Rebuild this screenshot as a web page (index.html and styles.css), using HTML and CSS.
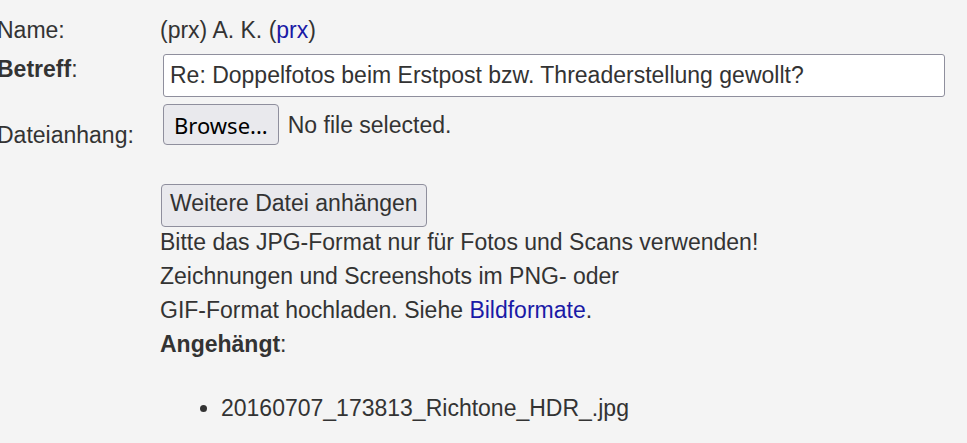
FILE: index.html
```html
<!DOCTYPE html>
<html lang="de">
<head>
    <meta charset="UTF-8">
    <title>Antwort schreiben</title>
    <link rel="stylesheet" href="styles.css">
</head>
<body>
    <form class="post-form" action="#" method="post">
        <div class="form-row">
            <div class="form-label">Name:</div>
            <div class="form-value">(prx) A. K. (<a href="#" class="link">prx</a>)</div>
        </div>

        <div class="form-row">
            <div class="form-label"><b>Betreff</b>:</div>
            <div class="form-value">
                <input type="text" class="subject-input" name="subject"
                       value="Re: Doppelfotos beim Erstpost bzw. Threaderstellung gewollt?">
            </div>
        </div>

        <div class="form-row">
            <div class="form-label label-file">Dateianhang:</div>
            <div class="form-value file-field">
                <button type="button" class="browse-btn">Browse...</button>
                <span class="file-status">No file selected.</span>
            </div>
        </div>

        <div class="form-row">
            <div class="form-label"></div>
            <div class="form-value attach-block">
                <button type="button" class="more-btn">Weitere Datei anhängen</button>
                <p class="attach-hint">
                    Bitte das JPG-Format nur für Fotos und Scans verwenden!<br>
                    Zeichnungen und Screenshots im PNG- oder<br>
                    GIF-Format hochladen. Siehe <a href="#" class="link">Bildformate</a>.<br>
                    <b>Angehängt</b>:
                </p>
                <ul class="attach-list">
                    <li>20160707_173813_Richtone_HDR_.jpg</li>
                </ul>
            </div>
        </div>
    </form>
</body>
</html>
```

FILE: styles.css
```css
* {
    box-sizing: border-box;
}

body {
    margin: 0;
    background: #f4f4f4;
    color: #333;
    font-family: "Liberation Sans", Arial, sans-serif;
    font-size: 23px;
    line-height: 34px;
    overflow: hidden;
}

.post-form {
    margin-left: -3px;
    padding-top: 13px;
}

.form-row {
    display: flex;
    align-items: flex-start;
}

.form-row + .form-row {
    margin-top: 5px;
}

.form-label {
    width: 163px;
    flex-shrink: 0;
}

.form-value {
    flex: 1;
}

.link {
    color: #1a1aa6;
    text-decoration: none;
}

.subject-input {
    display: block;
    width: 782px;
    height: 43px;
    margin: 2px 0 0 3px;
    padding: 0 6px;
    border: 1px solid #8f8f9d;
    border-radius: 3px;
    background: white;
    color: #333;
    font: inherit;
}

/* file picker row */
.form-row:nth-child(3) {
    margin-top: 7px;
}

.label-file {
    padding-top: 14px;
}

.file-field {
    display: flex;
    align-items: center;
}

.browse-btn {
    height: 41px;
    margin-left: 3px;
    padding: 0 10px;
    border: 1px solid #8f8f9d;
    border-radius: 4px;
    background: #e9e9ed;
    color: #000;
    font-family: "Noto Sans", sans-serif;
    font-size: 22px;
}

.file-status {
    margin-left: 9px;
}

.attach-block {
    padding-top: 27px;
}

.more-btn {
    display: block;
    margin-left: 1px;
    padding: 5px 8px 9px;
    border: 1px solid #8f8f9d;
    border-radius: 4px;
    background: #e9e9ed;
    color: #333;
    font: inherit;
    line-height: 27px;
}

.attach-hint {
    margin: -2px 0 0;
}

.attach-list {
    margin: 30px 0 0;
    padding-left: 61px;
}
```
